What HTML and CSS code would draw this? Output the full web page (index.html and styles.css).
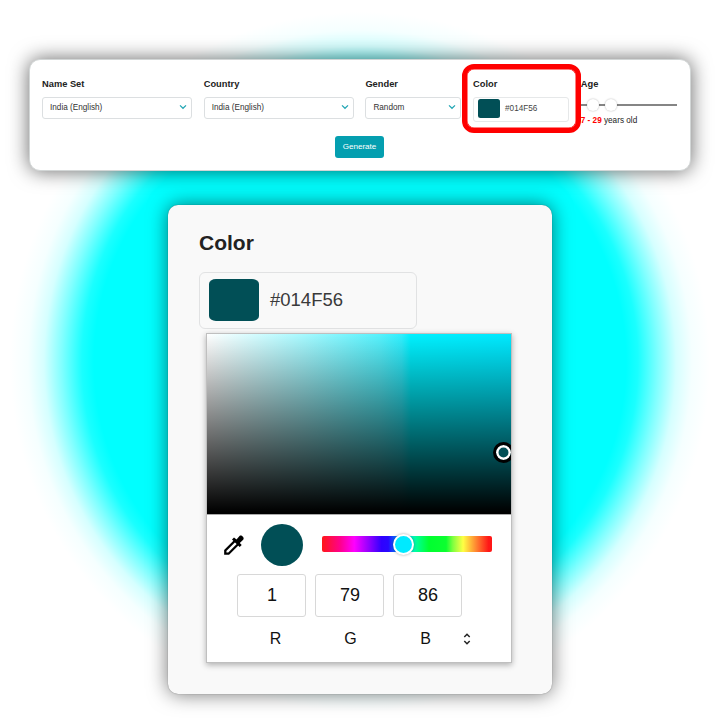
FILE: index.html
```html
<!DOCTYPE html>
<html lang="en">
<head>
<meta charset="utf-8">
<title>Color picker</title>
<link rel="stylesheet" href="styles.css">
</head>
<body>
<main class="stage">
  <section class="filters">
    <div class="fields">
      <div class="field">
        <div class="label">Name Set</div>
        <div class="select">India (English)<svg class="chevron" viewBox="0 0 8 6"><path d="M1 1.4 4 4.3 7 1.4"/></svg></div>
      </div>
      <div class="field">
        <div class="label">Country</div>
        <div class="select">India (English)<svg class="chevron" viewBox="0 0 8 6"><path d="M1 1.4 4 4.3 7 1.4"/></svg></div>
      </div>
      <div class="field">
        <div class="label">Gender</div>
        <div class="select">Random<svg class="chevron" viewBox="0 0 8 6"><path d="M1 1.4 4 4.3 7 1.4"/></svg></div>
      </div>
      <div class="field highlighted">
        <div class="label">Color</div>
        <div class="color-input"><span class="swatch"></span>#014F56</div>
      </div>
      <div class="field">
        <div class="label">Age</div>
        <div class="slider"><i class="knob knob-min"></i><i class="knob knob-max"></i></div>
        <div class="age"><b>7 - 29</b> years old</div>
      </div>
    </div>
    <div class="generate">Generate</div>
  </section>

  <section class="detail">
    <h1>Color</h1>
    <div class="color-input large"><span class="swatch"></span>#014F56</div>
    <div class="picker">
      <div class="spectrum"><i class="cursor"></i></div>
      <div class="tools">
        <svg class="dropper" viewBox="0 0 20 20"><path class="tube" d="M11 5.700 1.300 15.400V18.700H4.600L14.300 9"/><path d="M8 4.500 10 2.500l2.500 2L15.500 1C17.300-.8 21 2.800 19.200 4.700L15.800 8l1.900 2-2 2Z"/></svg>
        <span class="preview"></span>
        <div class="hue"><i class="hue-knob"></i></div>
      </div>
      <div class="values"><span>1</span><span>79</span><span>86</span></div>
      <div class="channels"><span>R</span><span>G</span><span>B</span><svg class="sort" viewBox="0 0 8 12"><path d="M1.300 4 4 1.300 6.700 4M1.300 8 4 10.700 6.700 8"/></svg></div>
    </div>
  </section>
</main>
</body>
</html>
```
FILE: styles.css
```css
*, *::after { box-sizing: border-box; }
body {
  margin: 0;
  background: #fff;
  font-family: "Liberation Sans", Arial, sans-serif;
  color: #222;
}
.stage {
  width: 720px;
  height: 720px;
  padding-top: 59px;
  overflow: hidden;
  display: flex;
  flex-direction: column;
  align-items: center;
  gap: 34px;
  background: radial-gradient(circle at 360px 362px, #0ff 0 266px, #1affff 278px, #80ffff 298px, #d5ffff 316px, #f5ffff 332px, #fff 350px);
}
.filters {
  width: 662px;
  height: 112px;
  flex: none;
  padding: 18.500px 12px 0;
  border: 1px solid #d2d6d6;
  border-radius: 11px;
  background: #fff;
  box-shadow: 0 0 20px rgba(0, 0, 0, .6);
}
.fields {
  display: grid;
  grid-template-columns: 150px 150px 96px 96px 96px;
  column-gap: 11.700px;
  height: 57px;
}
.label {
  height: 11px;
  margin-bottom: 7px;
  font-size: 9.300px;
  line-height: 11px;
  font-weight: bold;
}
.select {
  height: 22px;
  padding: 0 4px 1px 7px;
  display: flex;
  align-items: center;
  justify-content: space-between;
  border: 1px solid #dcdfe1;
  border-radius: 3px;
  font-size: 8.200px;
  line-height: 9px;
  color: #333;
}
.chevron { width: 8px; height: 6px; fill: none; stroke: #22a6b4; stroke-width: 1.200; }
.highlighted { position: relative; }
.highlighted::after {
  content: "";
  position: absolute;
  inset: -14.500px -12px auto -11.500px;
  height: 68.500px;
  border: 5.500px solid #f00;
  border-radius: 12px;
  box-shadow: inset 0 0 0 .5px #f00;
}
.color-input {
  height: 25px;
  padding: 0 0 1px 4px;
  display: flex;
  align-items: center;
  gap: 5px;
  border: 1px solid #e6e8e9;
  border-radius: 3px;
  font-size: 8.200px;
  color: #444;
}
.swatch { width: 22px; height: 19px; border-radius: 2.500px; background: #014f56; }
.slider {
  position: relative;
  height: 1.500px;
  margin-top: 14.500px;
  background: #858585;
}
.knob {
  position: absolute;
  top: -5.500px;
  width: 12px;
  height: 12px;
  border-radius: 50%;
  background: #fff;
  box-shadow: 0 0 2px rgba(0, 0, 0, .3);
}
.knob-min { left: 6px; }
.knob-max { left: 24px; }
.age { margin-top: 10px; font-size: 8.200px; line-height: 10px; white-space: nowrap; }
.age b { color: #f00; }
.generate {
  width: 49px;
  height: 22px;
  margin: 0 auto;
  position: relative;
  left: -.5px;
  border-radius: 3px;
  background: #049fb0;
  color: #fff;
  font-size: 8.100px;
  line-height: 22px;
  text-align: center;
}
.detail {
  width: 384px;
  height: 489px;
  flex: none;
  padding: 24px 31px 0;
  border-radius: 10px;
  background: #f9f9f9;
  box-shadow: 0 0 20px rgba(0, 0, 0, .55), 0 0 1px rgba(0, 0, 0, .5);
}
h1 { margin: 0 0 15px; font-size: 21px; line-height: 28px; }
.large {
  width: 218px;
  height: 57px;
  padding: 0 0 2px 9px;
  gap: 11px;
  border-color: #e1e2e3;
  border-radius: 6px;
  font-size: 18.500px;
  color: #3a3a3a;
}
.large .swatch { width: 50px; height: 42px; border-radius: 7px / 5px; }
.picker {
  width: 306px;
  height: 330px;
  margin: 4px 0 0 7px;
  border: 1px solid #bfbfbf;
  background: #fff;
  box-shadow: 0 2px 6px rgba(0, 0, 0, .3);
}
.spectrum {
  position: relative;
  height: 181px;
  overflow: hidden;
  border-bottom: 1px solid #aaa;
  background:
    linear-gradient(to bottom, transparent, #000 99%),
    linear-gradient(to right, #fff, #a5f9ff 32%, #56f2fd 57%, #30f0ff 64%, #00f1ff 67%, #00e9ff);
}
.cursor {
  position: absolute;
  left: 286px;
  top: 107.500px;
  width: 21px;
  height: 21px;
  border: 3px solid #000;
  border-radius: 50%;
  background: #014f56;
  box-shadow: inset 0 0 0 2.500px #fff;
}
.tools {
  display: flex;
  align-items: center;
  height: 42px;
  margin: 9px 18px 0 17px;
}
.dropper { width: 20px; height: 20px; overflow: visible; }
.dropper .tube { fill: none; stroke: #000; stroke-width: 2.300; }
.preview { width: 42px; height: 42px; margin: 0 19px 0 17px; border-radius: 50%; background: #014f56; }
.hue {
  position: relative;
  top: -1px;
  width: 170px;
  height: 16px;
  border-radius: 2px;
  background: linear-gradient(to right, #ff1717, #ff0090 11%, #f0f 19%, #8000ff 29%, #3000ff 35%, #2808ff 39%, #0080ff 44%, #00ecff 50%, #00ff90 56%, #00ff30 63%, #0cff30 73%, #80ff40 77%, #ffff44 83%, #ff8030 91%, #ff1717 98%);
}
.hue-knob {
  position: absolute;
  left: 71px;
  top: -2.500px;
  width: 21px;
  height: 21px;
  border: 2.500px solid #fff;
  border-radius: 50%;
  background: #00eaff;
  box-shadow: 0 0 3px rgba(0, 0, 0, .35);
}
.values { display: flex; gap: 9px; margin: 8px 0 0 30.400px; }
.values span {
  width: 69px;
  height: 43px;
  border: 1.500px solid #d8d8d8;
  border-radius: 3px;
  color: #111;
  font-size: 18px;
  line-height: 41px;
  text-align: center;
}
.channels {
  display: flex;
  align-items: center;
  height: 20px;
  margin: 12px 0 0 31px;
  color: #111;
  font-size: 16px;
}
.channels span { width: 75px; text-align: center; }
.sort { width: 8px; height: 12px; fill: none; stroke: #222; stroke-width: 1.500; }
```
